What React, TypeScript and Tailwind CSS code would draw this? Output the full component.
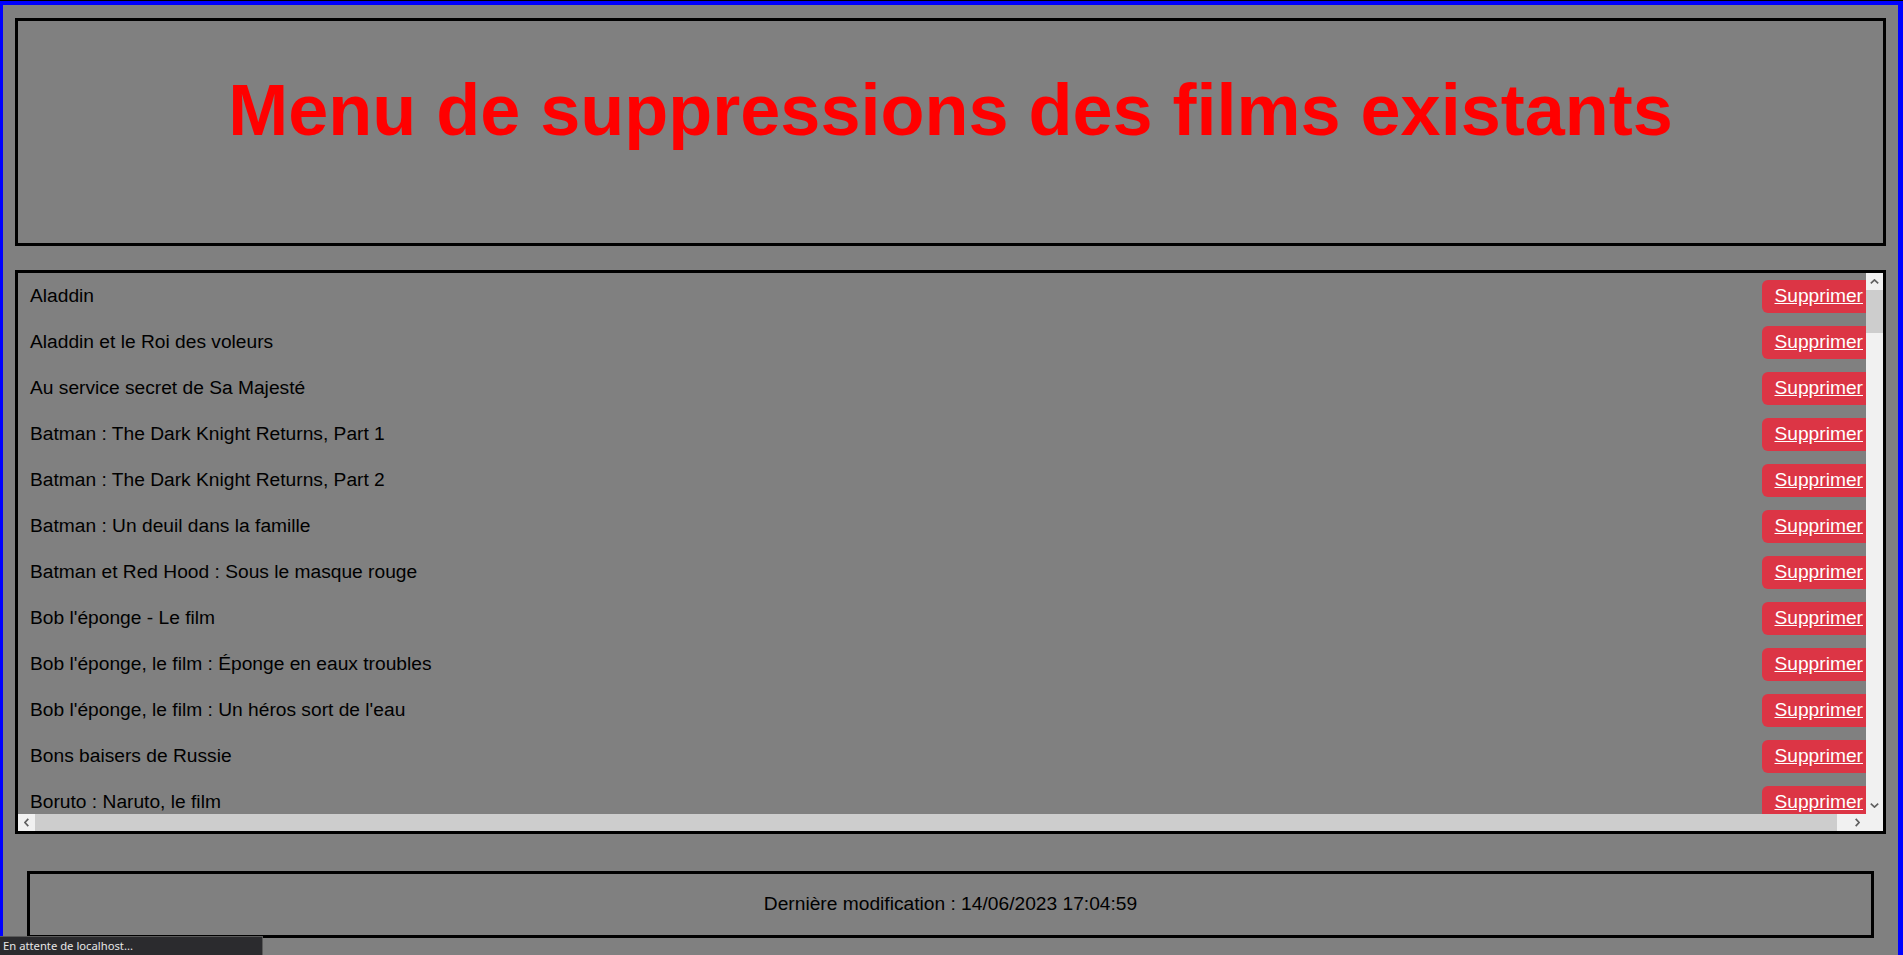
const films: string[] = [
  "Aladdin",
  "Aladdin et le Roi des voleurs",
  "Au service secret de Sa Majesté",
  "Batman : The Dark Knight Returns, Part 1",
  "Batman : The Dark Knight Returns, Part 2",
  "Batman : Un deuil dans la famille",
  "Batman et Red Hood : Sous le masque rouge",
  "Bob l'éponge - Le film",
  "Bob l'éponge, le film : Éponge en eaux troubles",
  "Bob l'éponge, le film : Un héros sort de l'eau",
  "Bons baisers de Russie",
  "Boruto : Naruto, le film",
];

const others: string[] = [
  "Bumblebee", "Buzz l'Éclair", "Cars", "Cars 2", "Cars 3", "Casino Royale", "Cendrillon",
  "Charlie et la Chocolaterie", "Chicken Run", "Coco", "Demon Slayer : Le train de l'infini",
  "Dragon Ball Super : Broly", "Dragons", "Dragons 2", "Dragons 3 : Le Monde caché", "Dumbo", "Dune",
  "E.T. l'extra-terrestre", "En avant", "Encanto", "Fantasia", "Forrest Gump", "Frère des ours",
  "Gladiator", "Goldfinger", "Harry Potter à l'école des sorciers", "Harry Potter et la Chambre des secrets",
  "Harry Potter et le Prisonnier d'Azkaban", "Harry Potter et la Coupe de feu", "Hercule",
  "Hôtel Transylvanie", "Inception", "Indiana Jones et la Dernière Croisade",
  "Indiana Jones et le Temple maudit", "Interstellar", "Joker", "Jurassic Park",
  "Justice League : Crisis on Two Earths", "Justice League : Dark", "Kung Fu Panda", "Kung Fu Panda 2",
  "Kung Fu Panda 3", "L'Âge de glace", "L'Espion qui m'aimait", "L'Étrange Noël de monsieur Jack",
  "La Belle au bois dormant", "La Belle et la Bête", "La Belle et le Clochard", "La Petite Sirène",
  "La Planète au trésor", "La Princesse et la Grenouille", "La Reine des neiges", "La Reine des neiges II",
  "Là-haut", "Le Bossu de Notre-Dame", "Le Château ambulant", "Le Livre de la jungle", "Le Monde de Dory",
  "Le Monde de Nemo", "Le Parrain", "Le Roi lion", "Le Seigneur des anneaux : La Communauté de l'anneau",
  "Le Seigneur des anneaux : Les Deux Tours", "Le Seigneur des anneaux : Le Retour du roi",
  "Le Voyage d'Arlo", "Le Voyage de Chihiro", "Les Aristochats", "Les Cent-Un Dalmatiens",
  "Les Indestructibles", "Les Indestructibles 2", "Les Mondes de Ralph", "Les Nouveaux Héros",
  "Les Visiteurs", "Luca", "Madagascar", "Mary Poppins", "Matrix", "Meurs un autre jour",
  "Moi, moche et méchant", "Moi, moche et méchant 2", "Mon voisin Totoro", "Monstres Academy",
  "Monstres et Cie", "Moonraker", "Mulan", "Naruto Shippuden : The Last", "Nausicaä de la Vallée du vent",
  "Oliver et Compagnie", "One Piece Film : Red", "Opération Tonnerre", "Pinocchio", "Pocahontas",
  "Ponyo sur la falaise", "Princesse Mononoké", "Pulp Fiction", "Raiponce", "Ratatouille", "Rebelle",
  "Retour vers le futur", "Retour vers le futur 2", "Retour vers le futur 3", "Rien que pour vos yeux",
  "Robin des Bois", "Rogue One : A Star Wars Story", "Shrek", "Shrek 2", "Shrek le troisième", "Skyfall",
  "Solo : A Star Wars Story", "Soul", "Spectre", "Spider-Man : New Generation",
  "Star Wars : Episode I - La Menace fantôme", "Star Wars : Episode II - L'Attaque des clones",
  "Star Wars : Episode III - La Revanche des Sith", "Star Wars : Episode IV - Un nouvel espoir",
  "Star Wars : Episode V - L'Empire contre-attaque", "Star Wars : Episode VI - Le Retour du Jedi",
  "Star Wars : Episode VII - Le Réveil de la Force", "Star Wars : Episode VIII - Les Derniers Jedi",
  "Star Wars : Episode IX - L'Ascension de Skywalker", "Superman : L'Homme d'acier", "Tarzan", "Titanic",
  "Toy Story", "Toy Story 2", "Toy Story 3", "Toy Story 4", "Vaiana, la légende du bout du monde",
  "Vice-versa", "Vivre et laisser mourir", "Wall-E", "Wonder Woman", "Your Name", "Zootopie",
];

const allFilms = [...films, ...others.sort((a, b) => a.localeCompare(b, "fr"))];

// little scrollbar arrow, drawn like the windows chrome ones
function Arrow({ dir }: { dir: "up" | "down" | "left" | "right" }) {
  const rot = { up: "rotate-0", down: "rotate-180", left: "-rotate-90", right: "rotate-90" }[dir];
  return (
    <div className="w-[17px] h-[17px] shrink-0 flex items-center justify-center bg-[#f1f1f1]">
      <svg viewBox="0 0 9 5" className={`w-[9px] h-[5px] ${rot}`}>
        <path d="M0.8 4.3 L4.5 0.9 L8.2 4.3" fill="none" stroke="#606060" strokeWidth="1.7" />
      </svg>
    </div>
  );
}

function FilmRow({ title }: { title: string }) {
  return (
    <div className="flex items-center justify-between w-[1860px] h-[46px] shrink-0 pl-[12px] pr-[3px]">
      <span className="text-black whitespace-nowrap">{title}</span>
      <a href="#" className="flex items-center h-[33px] px-[12px] rounded-[6px] bg-[#dc3545] text-white underline">
        Supprimer
      </a>
    </div>
  );
}

export default function App() {
  return (
    <div className="border-t border-black font-['Liberation_Sans',Arial,sans-serif] text-[19.2px]">
      <div className="min-h-[1000px] bg-[#808080] border-t-4 border-l-[3px] border-r-[5px] border-[#0000ff] px-[12px] pt-[13px] pb-[40px] flex flex-col">
        <header className="h-[228px] border-[3px] border-black">
          <h1 className="mt-[48px] text-center text-[72px] font-bold text-[#ff0000] leading-[normal]">
            Menu de suppressions des films existants
          </h1>
        </header>

        <div className="mt-[24px] border-[3px] border-black grid grid-cols-[1fr_17px] grid-rows-[541px_17px]">
          <div className="overflow-hidden flex flex-col">
            {allFilms.map((f) => (
              <FilmRow key={f} title={f} />
            ))}
          </div>
          <div className="flex flex-col bg-[#f1f1f1]">
            <Arrow dir="up" />
            <div className="h-[43px] bg-[#cdcdcd]" />
            <div className="flex-1" />
            <Arrow dir="down" />
          </div>
          <div className="flex bg-[#f1f1f1]">
            <Arrow dir="left" />
            <div className="flex-1 bg-[#cdcdcd] mr-[12px]" />
            <Arrow dir="right" />
          </div>
          <div className="bg-[#f1f1f1]" />
        </div>

        <footer className="mx-[12px] mt-[37px] h-[67px] border-[3px] border-black flex items-center justify-center text-black">
          Dernière modification : 14/06/2023 17:04:59
        </footer>
      </div>

      <div className="fixed bottom-0 left-0 w-[263px] h-[19px] bg-[#2b2b2e] border-t border-r border-[#5a5a5a] pl-[3px] text-[11.25px] leading-[18px] text-[#e6e6e6] font-['Noto_Sans',sans-serif]">
        En attente de localhost...
      </div>
    </div>
  );
}
